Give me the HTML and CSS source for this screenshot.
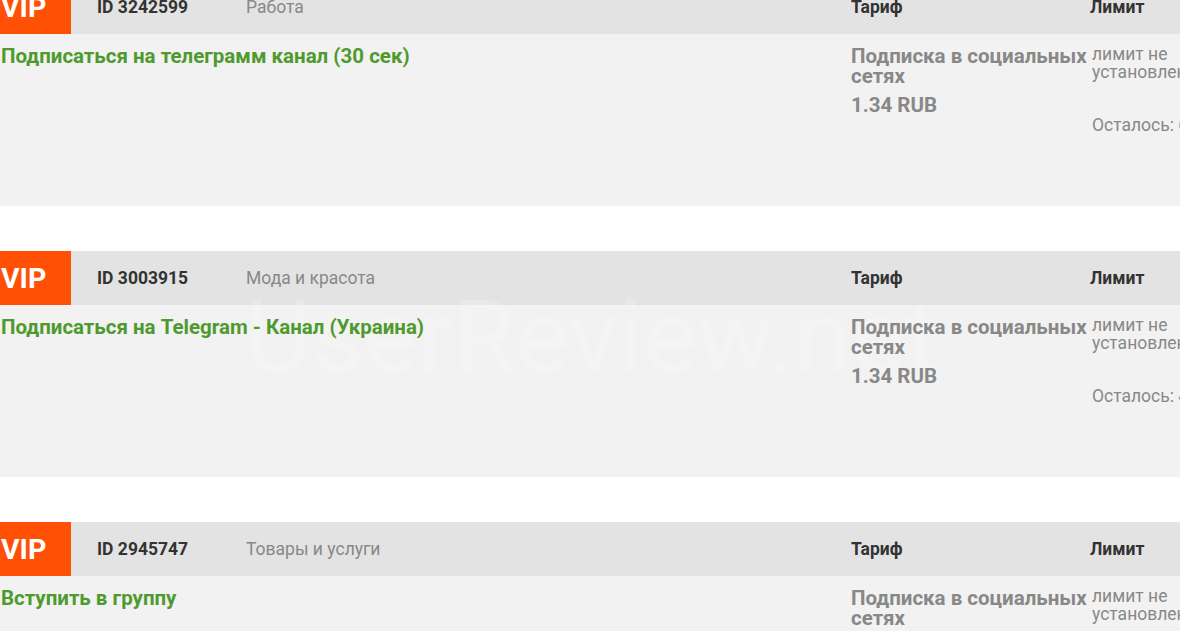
FILE: index.html
```html
<!DOCTYPE html>
<html lang="ru">
<head>
    <meta charset="UTF-8">
    <meta name="viewport" content="width=device-width, initial-scale=1.0">
    <title>Задания</title>
    <link rel="stylesheet" href="styles.css">
</head>
<body>
    <div class="task-list">
      <div class="task">
        <div class="task-head">
          <div class="head-main">
            <span class="vip">VIP</span>
            <span class="task-id">ID 3242599</span>
            <span class="task-cat">Работа</span>
          </div>
          <div class="head-col">Тариф</div>
          <div class="head-col">Лимит</div>
        </div>
        <div class="task-body">
          <div class="task-title">Подписаться на телеграмм канал (30 сек)</div>
          <div class="tariff">
            <div class="tariff-name">Подписка в социальных сетях</div>
            <div class="tariff-price">1.34 RUB</div>
          </div>
          <div class="limit">
            <div>лимит не установлен</div>
            <div class="left">Осталось: 612</div>
          </div>
        </div>
      </div>

      <div class="task">
        <div class="watermark">UserReview.net</div>
        <div class="task-head">
          <div class="head-main">
            <span class="vip">VIP</span>
            <span class="task-id">ID 3003915</span>
            <span class="task-cat">Мода и красота</span>
          </div>
          <div class="head-col">Тариф</div>
          <div class="head-col">Лимит</div>
        </div>
        <div class="task-body">
          <div class="task-title">Подписаться на Telegram - Канал (Украина)</div>
          <div class="tariff">
            <div class="tariff-name">Подписка в социальных сетях</div>
            <div class="tariff-price">1.34 RUB</div>
          </div>
          <div class="limit">
            <div>лимит не установлен</div>
            <div class="left">Осталось: 458</div>
          </div>
        </div>
      </div>

      <div class="task">
        <div class="task-head">
          <div class="head-main">
            <span class="vip">VIP</span>
            <span class="task-id">ID 2945747</span>
            <span class="task-cat">Товары и услуги</span>
          </div>
          <div class="head-col">Тариф</div>
          <div class="head-col">Лимит</div>
        </div>
        <div class="task-body">
          <div class="task-title">Вступить в группу</div>
          <div class="tariff">
            <div class="tariff-name">Подписка в социальных сетях</div>
            <div class="tariff-price">1.34 RUB</div>
          </div>
          <div class="limit">
            <div>лимит не установлен</div>
            <div class="left">Осталось: 230</div>
          </div>
        </div>
      </div>
    </div>
</body>
</html>
```

FILE: styles.css
```css
html, body {
  overflow: hidden;
}
body {
  font-family: Roboto, "Liberation Sans", sans-serif;
  margin: 0;
  padding: 0;
  background-color: #fff;
  color: #333;
}
.task-list {
  width: 1300px;
  margin-top: -20px;
}
.task {
  position: relative;
  margin-bottom: 45px;
}
.task-head,
.task-body {
  position: relative;
  display: grid;
  grid-template-columns: 851px 239px 1fr;
}
.task-head {
  height: 54px;
  background-color: #e3e3e3;
  align-items: center;
}
.head-main {
  display: flex;
  align-items: center;
  height: 100%;
}
.vip {
  width: 71px;
  height: 100%;
  box-sizing: border-box;
  padding-left: 1px;
  display: flex;
  align-items: center;
  background-color: #ff5006;
  color: #fff;
  font-weight: bold;
  font-size: 28.5px;
}
.task-id {
  width: 149px;
  padding-left: 26px;
  font-weight: bold;
  font-size: 17.5px;
}
.task-cat {
  color: #888;
  font-size: 17.5px;
}
.head-col {
  font-weight: bold;
  font-size: 17.5px;
}
.task-body {
  height: 172px;
  box-sizing: border-box;
  padding-top: 11px;
  background-color: #f2f2f2;
}
.task-title,
.tariff,
.limit {
  position: relative;
  z-index: 2;
}
.task-title {
  color: #4f9a2e;
  font-weight: bold;
  font-size: 20.5px;
  line-height: 22px;
  padding-left: 1px;
}
.tariff {
  color: #888;
  font-weight: bold;
  font-size: 20.5px;
  line-height: 20px;
  margin-top: 1px;
}
.tariff-price {
  margin-top: 9px;
}
.limit {
  width: 110px;
  padding-left: 2px;
  color: #888;
  font-size: 17.5px;
  line-height: 18px;
}
.left {
  margin-top: 35px;
  white-space: nowrap;
}
.watermark {
  position: absolute;
  z-index: 1;
  left: 245px;
  top: 26px;
  font-size: 102px;
  color: rgba(255, 255, 255, 0.2);
  pointer-events: none;
}
```
